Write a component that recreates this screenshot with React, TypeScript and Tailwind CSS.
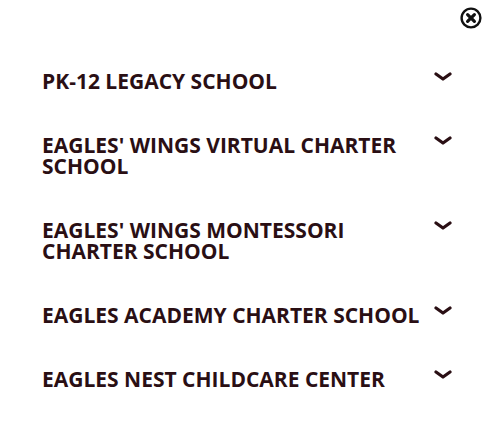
import React from 'react';

const schools = [
  'PK-12 LEGACY SCHOOL',
  "EAGLES' WINGS VIRTUAL CHARTER SCHOOL",
  "EAGLES' WINGS MONTESSORI CHARTER SCHOOL",
  'EAGLES ACADEMY CHARTER SCHOOL',
  'EAGLES NEST CHILDCARE CENTER',
];

const Chevron: React.FC = () => (
  <svg width="18" height="9" viewBox="0 0 18 9" className="shrink-0 mt-[1px]">
    <path d="M2 2 L9 7 L16 2" fill="none" stroke="#2a0f14" strokeWidth="3.2" strokeLinecap="round" strokeLinejoin="round" />
  </svg>
);

const CloseIcon: React.FC = () => (
  <svg width="22" height="22" viewBox="0 0 22 22">
    <circle cx="11" cy="11" r="9.4" fill="none" stroke="#111" strokeWidth="2.4" />
    <path d="M7.6 7.6 L14.4 14.4 M14.4 7.6 L7.6 14.4" stroke="#111" strokeWidth="3.2" strokeLinecap="round" />
  </svg>
);

const App: React.FC = () => {
  return (
    <div className="w-[500px] h-[436px] bg-white" style={{ fontFamily: '"Open Sans", sans-serif' }}>
      <div className="flex justify-end pt-[7px] pr-[18px]">
        <CloseIcon />
      </div>

      {/* Accordion list */}
      <ul className="mt-[42px] pl-[42px] pr-[48px] flex flex-col gap-[43px]">
        {schools.map((name) => (
          <li key={name} className="flex items-start justify-between">
            <span className="w-[385px] text-[21px] leading-[21px] font-bold text-[#2a0f14]">{name}</span>
            <Chevron />
          </li>
        ))}
      </ul>
    </div>
  );
};

export default App;
